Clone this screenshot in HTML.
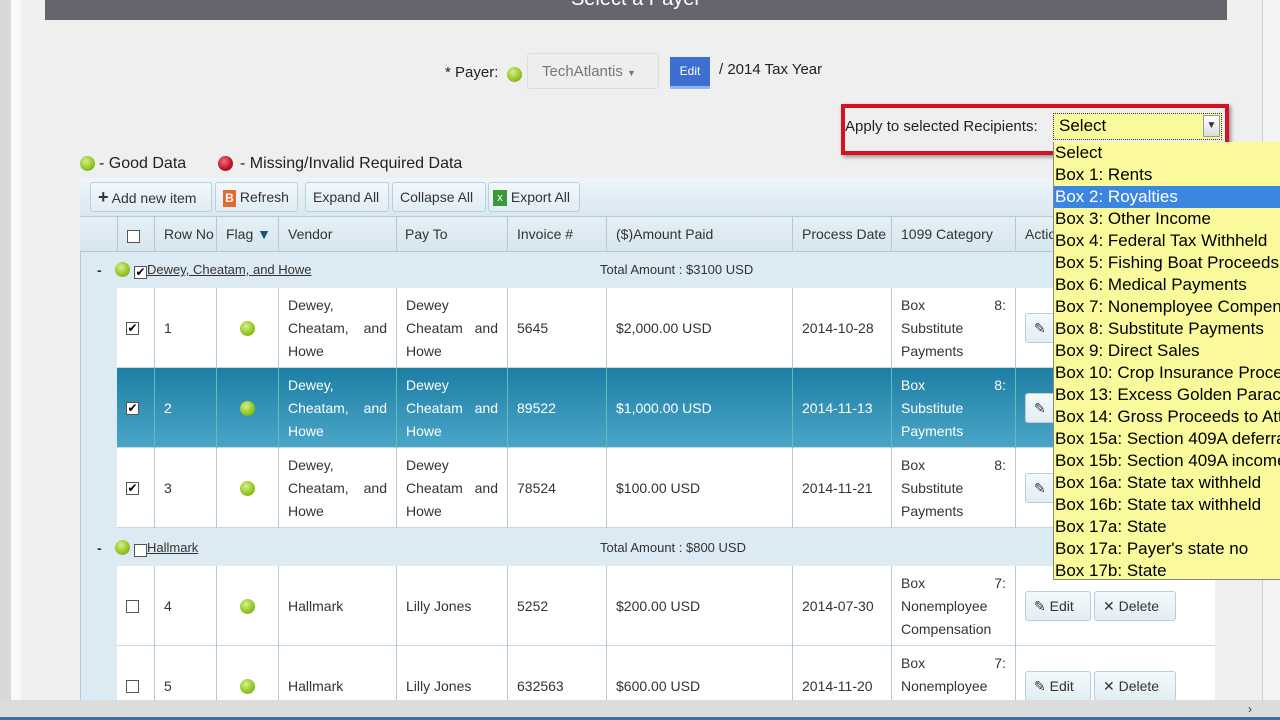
<!DOCTYPE html>
<html><head><meta charset="utf-8"><style>
*{box-sizing:border-box;margin:0;padding:0}
html,body{width:1280px;height:720px;overflow:hidden}
body{background:#efefef;font-family:"Liberation Sans",sans-serif;font-size:14px;color:#333;position:relative}
.a{position:absolute}
.hdr{left:45px;top:0;width:1182px;height:20px;background:#65656d;overflow:hidden}
.hdr span{position:absolute;left:0;width:100%;top:-12px;color:#fff;font-size:20px;text-align:center;line-height:22px}
.dot{position:absolute;width:15px;height:15px;border-radius:50%;background:radial-gradient(circle at 40% 35%,#d6f08a,#8fc31f 60%,#6fa010)}
.red{background:radial-gradient(circle at 40% 35%,#f07080,#c01025 60%,#900010)}
.btn{position:absolute;top:182px;height:30px;border:1px solid #b8cfdc;border-radius:3px;background:linear-gradient(#f2f8fb,#e0edf4);line-height:28px;font-size:14px;color:#333;padding:0 7px;white-space:nowrap}
.cell{position:absolute;border-left:1px solid #b5c9d4;display:flex;align-items:center;padding:0 9px;line-height:23px}
.j{text-align:justify;text-align-last:left}
.cb{position:absolute;width:13px;height:13px;border:1px solid #555;background:#fff;font-size:12px;line-height:10px;text-align:center;color:#000}
.row{position:absolute;left:117px;width:1098px;background:#fff;border-bottom:1px solid #c8d8e0}
.sel{background:linear-gradient(#1d7ea3,#4aa6c8);color:#fff}
.eb{position:absolute;height:30px;border:1px solid #b8cfdc;border-radius:3px;background:linear-gradient(#f4f9fb,#e2eef4);line-height:28px;padding:0 8px;color:#333;white-space:nowrap}
.dd{left:1053px;top:142px;width:227px;height:438px;background:#fafa9c;font-size:17px;color:#000;overflow:hidden;border-left:1px solid #888;border-bottom:1px solid #888}
.dd div{height:22px;line-height:22px;padding-left:1px;white-space:nowrap}
</style></head><body>
<div class="a" style="left:0;top:0;width:11px;height:700px;background:#d8d8d8"></div>
<div class="a" style="left:11px;top:0;width:10px;height:700px;background:#fafafa"></div>
<div class="a" style="left:1262px;top:0;width:18px;height:700px;background:#f4f4f4;border-left:1px solid #ccc"></div>
<div class="a hdr"><span>Select a Payer</span></div>

<div class="a" style="left:445px;top:64px;font-size:15px;color:#222">* Payer:</div>
<div class="dot" style="left:507px;top:67px"></div>
<div class="a" style="left:527px;top:53px;width:132px;height:36px;border:1px solid #ddd;border-radius:3px;background:#eee;color:#777;font-size:15px;line-height:36px;padding-left:14px">TechAtlantis <span style="font-size:9px">▼</span></div>
<div class="a" style="left:670px;top:57px;width:40px;height:32px;background:#3c6fd0;color:#fff;font-size:12px;line-height:28px;text-align:center;border-bottom:3px solid #8ab8ea">Edit</div>
<div class="a" style="left:719px;top:61px;font-size:15px;color:#222">/ 2014 Tax Year</div>

<div class="a" style="left:841px;top:104px;width:388px;height:51px;border:4px solid #d81020;box-shadow:2px 2px 4px rgba(0,0,0,.4)"></div>
<div class="a" style="left:845px;top:118px;font-size:15px;color:#222">Apply to selected Recipients:</div>
<div class="a" style="left:1053px;top:113px;width:169px;height:27px;background:#fafa9c;border:1px dotted #333;font-size:17px;line-height:24px;padding-left:5px;color:#000">Select</div>
<div class="a" style="left:1203px;top:115px;width:17px;height:22px;background:linear-gradient(#fff,#ddd);border:1px solid #999;font-size:10px;text-align:center;line-height:20px">▼</div>

<div class="dot" style="left:80px;top:156px"></div>
<div class="a" style="left:99px;top:155px;font-size:16px;color:#222">- Good Data</div>
<div class="dot red" style="left:218px;top:156px"></div>
<div class="a" style="left:240px;top:155px;font-size:16px;color:#222">- Missing/Invalid Required Data</div>

<div class="a" style="left:80px;top:178px;width:1135px;height:530px;background:#dcebf3;border:1px solid #b5c9d4"></div>
<div class="a" style="left:80px;top:178px;width:1135px;height:38px;background:linear-gradient(#edf5f9,#d8e8f1)"></div>
<div class="btn" style="left:90px;width:122px"><b style="font-size:18px">+</b> Add new item</div>
<div class="btn" style="left:215px;width:83px"><span style="display:inline-block;width:13px;height:17px;background:#e06a30;color:#fff;font-size:12px;line-height:17px;text-align:center;vertical-align:middle;font-weight:bold">B</span> Refresh</div>
<div class="btn" style="left:305px;width:84px">Expand All</div>
<div class="btn" style="left:392px;width:94px">Collapse All</div>
<div class="btn" style="left:488px;width:92px;padding:0 4px"><span style="display:inline-block;width:14px;height:16px;background:#3a9a3a;color:#fff;font-size:11px;line-height:16px;text-align:center;vertical-align:middle">x</span> Export All</div>

<div class="a" style="left:80px;top:216px;width:1135px;height:36px;background:linear-gradient(#e6f0f5,#d6e6ef);border-top:1px solid #b5c9d4;border-bottom:1px solid #b5c9d4"></div>
<div class="cb" style="left:127px;top:230px"></div>
<div class="a" style="left:164px;top:226px">Row No</div>
<div class="a" style="left:226px;top:226px">Flag <span style="color:#157">▼</span></div>
<div class="a" style="left:288px;top:226px">Vendor</div>
<div class="a" style="left:405px;top:226px">Pay To</div>
<div class="a" style="left:517px;top:226px">Invoice #</div>
<div class="a" style="left:616px;top:226px">($)Amount Paid</div>
<div class="a" style="left:802px;top:226px">Process Date</div>
<div class="a" style="left:901px;top:226px">1099 Category</div>
<div class="a" style="left:1025px;top:226px">Actions</div>
<div class="a" style="left:117px;top:216px;width:0;height:36px;border-left:1px solid #b5c9d4"></div>
<div class="a" style="left:154px;top:216px;width:0;height:36px;border-left:1px solid #b5c9d4"></div>
<div class="a" style="left:216px;top:216px;width:0;height:36px;border-left:1px solid #b5c9d4"></div>
<div class="a" style="left:278px;top:216px;width:0;height:36px;border-left:1px solid #b5c9d4"></div>
<div class="a" style="left:396px;top:216px;width:0;height:36px;border-left:1px solid #b5c9d4"></div>
<div class="a" style="left:507px;top:216px;width:0;height:36px;border-left:1px solid #b5c9d4"></div>
<div class="a" style="left:606px;top:216px;width:0;height:36px;border-left:1px solid #b5c9d4"></div>
<div class="a" style="left:792px;top:216px;width:0;height:36px;border-left:1px solid #b5c9d4"></div>
<div class="a" style="left:891px;top:216px;width:0;height:36px;border-left:1px solid #b5c9d4"></div>
<div class="a" style="left:1015px;top:216px;width:0;height:36px;border-left:1px solid #b5c9d4"></div>

<div class="a" style="left:97px;top:262px;font-weight:bold">-</div>
<div class="dot" style="left:115px;top:262px"></div>
<div class="cb" style="left:134px;top:266px">✔</div>
<div class="a" style="left:147px;top:262px;font-size:13px;text-decoration:underline">Dewey, Cheatam, and Howe</div>
<div class="a" style="left:600px;top:262px;font-size:13px">Total Amount : $3100 USD</div>

<div class="row" style="top:288px;height:80px">
<div class="cell" style="left:0;width:37px;height:80px;border:0"><div class="cb" style="position:static">✔</div></div>
<div class="cell" style="left:37px;width:62px;height:80px">1</div>
<div class="cell" style="left:99px;width:62px;height:80px;justify-content:center"><div class="dot" style="position:static"></div></div>
<div class="cell j" style="left:161px;width:118px;height:80px">Dewey, Cheatam, and Howe</div>
<div class="cell j" style="left:279px;width:111px;height:80px">Dewey Cheatam and Howe</div>
<div class="cell" style="left:390px;width:99px;height:80px">5645</div>
<div class="cell" style="left:489px;width:186px;height:80px">$2,000.00 USD</div>
<div class="cell" style="left:675px;width:99px;height:80px">2014-10-28</div>
<div class="cell j" style="left:774px;width:124px;height:80px">Box 8: Substitute Payments</div>
<div class="cell" style="left:898px;width:200px;height:80px"><div class="eb" style="position:static;width:40px">✎</div></div>
</div>
<div class="row sel" style="top:368px;height:80px">
<div class="cell" style="left:0;width:37px;height:80px;border:0"><div class="cb" style="position:static">✔</div></div>
<div class="cell" style="left:37px;width:62px;height:80px;border-color:#6bb">2</div>
<div class="cell" style="left:99px;width:62px;height:80px;justify-content:center;border-color:#6bb"><div class="dot" style="position:static"></div></div>
<div class="cell j" style="left:161px;width:118px;height:80px;border-color:#6bb">Dewey, Cheatam, and Howe</div>
<div class="cell j" style="left:279px;width:111px;height:80px;border-color:#6bb">Dewey Cheatam and Howe</div>
<div class="cell" style="left:390px;width:99px;height:80px;border-color:#6bb">89522</div>
<div class="cell" style="left:489px;width:186px;height:80px;border-color:#6bb">$1,000.00 USD</div>
<div class="cell" style="left:675px;width:99px;height:80px;border-color:#6bb">2014-11-13</div>
<div class="cell j" style="left:774px;width:124px;height:80px;border-color:#6bb">Box 8: Substitute Payments</div>
<div class="cell" style="left:898px;width:200px;height:80px;border-color:#6bb"><div class="eb" style="position:static;width:40px">✎</div></div>
</div>
<div class="row" style="top:448px;height:80px">
<div class="cell" style="left:0;width:37px;height:80px;border:0"><div class="cb" style="position:static">✔</div></div>
<div class="cell" style="left:37px;width:62px;height:80px">3</div>
<div class="cell" style="left:99px;width:62px;height:80px;justify-content:center"><div class="dot" style="position:static"></div></div>
<div class="cell j" style="left:161px;width:118px;height:80px">Dewey, Cheatam, and Howe</div>
<div class="cell j" style="left:279px;width:111px;height:80px">Dewey Cheatam and Howe</div>
<div class="cell" style="left:390px;width:99px;height:80px">78524</div>
<div class="cell" style="left:489px;width:186px;height:80px">$100.00 USD</div>
<div class="cell" style="left:675px;width:99px;height:80px">2014-11-21</div>
<div class="cell j" style="left:774px;width:124px;height:80px">Box 8: Substitute Payments</div>
<div class="cell" style="left:898px;width:200px;height:80px"><div class="eb" style="position:static;width:40px">✎</div></div>
</div>

<div class="a" style="left:97px;top:540px;font-weight:bold">-</div>
<div class="dot" style="left:115px;top:540px"></div>
<div class="cb" style="left:134px;top:544px"></div>
<div class="a" style="left:147px;top:540px;font-size:13px;text-decoration:underline">Hallmark</div>
<div class="a" style="left:600px;top:540px;font-size:13px">Total Amount : $800 USD</div>

<div class="row" style="top:566px;height:80px">
<div class="cell" style="left:0;width:37px;height:80px;border:0"><div class="cb" style="position:static"></div></div>
<div class="cell" style="left:37px;width:62px;height:80px">4</div>
<div class="cell" style="left:99px;width:62px;height:80px;justify-content:center"><div class="dot" style="position:static"></div></div>
<div class="cell" style="left:161px;width:118px;height:80px">Hallmark</div>
<div class="cell" style="left:279px;width:111px;height:80px">Lilly Jones</div>
<div class="cell" style="left:390px;width:99px;height:80px">5252</div>
<div class="cell" style="left:489px;width:186px;height:80px">$200.00 USD</div>
<div class="cell" style="left:675px;width:99px;height:80px">2014-07-30</div>
<div class="cell j" style="left:774px;width:124px;height:80px">Box 7: Nonemployee Compensation</div>
<div class="cell" style="left:898px;width:200px;height:80px;gap:3px"><div class="eb" style="position:static;width:66px">✎ Edit</div><div class="eb" style="position:static;width:82px">✕ Delete</div></div>
</div>
<div class="row" style="top:646px;height:80px">
<div class="cell" style="left:0;width:37px;height:80px;border:0"><div class="cb" style="position:static"></div></div>
<div class="cell" style="left:37px;width:62px;height:80px">5</div>
<div class="cell" style="left:99px;width:62px;height:80px;justify-content:center"><div class="dot" style="position:static"></div></div>
<div class="cell" style="left:161px;width:118px;height:80px">Hallmark</div>
<div class="cell" style="left:279px;width:111px;height:80px">Lilly Jones</div>
<div class="cell" style="left:390px;width:99px;height:80px">632563</div>
<div class="cell" style="left:489px;width:186px;height:80px">$600.00 USD</div>
<div class="cell" style="left:675px;width:99px;height:80px">2014-11-20</div>
<div class="cell j" style="left:774px;width:124px;height:80px">Box 7: Nonemployee Compensation</div>
<div class="cell" style="left:898px;width:200px;height:80px;gap:3px"><div class="eb" style="position:static;width:66px">✎ Edit</div><div class="eb" style="position:static;width:82px">✕ Delete</div></div>
</div>

<div class="a dd">
<div>Select</div><div>Box 1: Rents</div><div style="background:#3a86e0;color:#fff">Box 2: Royalties</div><div>Box 3: Other Income</div><div>Box 4: Federal Tax Withheld</div><div>Box 5: Fishing Boat Proceeds</div><div>Box 6: Medical Payments</div><div>Box 7: Nonemployee Compensation</div><div>Box 8: Substitute Payments</div><div>Box 9: Direct Sales</div><div>Box 10: Crop Insurance Proceeds</div><div>Box 13: Excess Golden Parachute</div><div>Box 14: Gross Proceeds to Attorney</div><div>Box 15a: Section 409A deferrals</div><div>Box 15b: Section 409A income</div><div>Box 16a: State tax withheld</div><div>Box 16b: State tax withheld</div><div>Box 17a: State</div><div>Box 17a: Payer's state no</div><div>Box 17b: State</div>
</div>

<div class="a" style="left:0;top:700px;width:1280px;height:20px;background:#dcdcdc;border-bottom:3px solid #3a6ea0"></div>
<div class="a" style="left:1248px;top:702px;font-size:12px">›</div>
</body></html>
